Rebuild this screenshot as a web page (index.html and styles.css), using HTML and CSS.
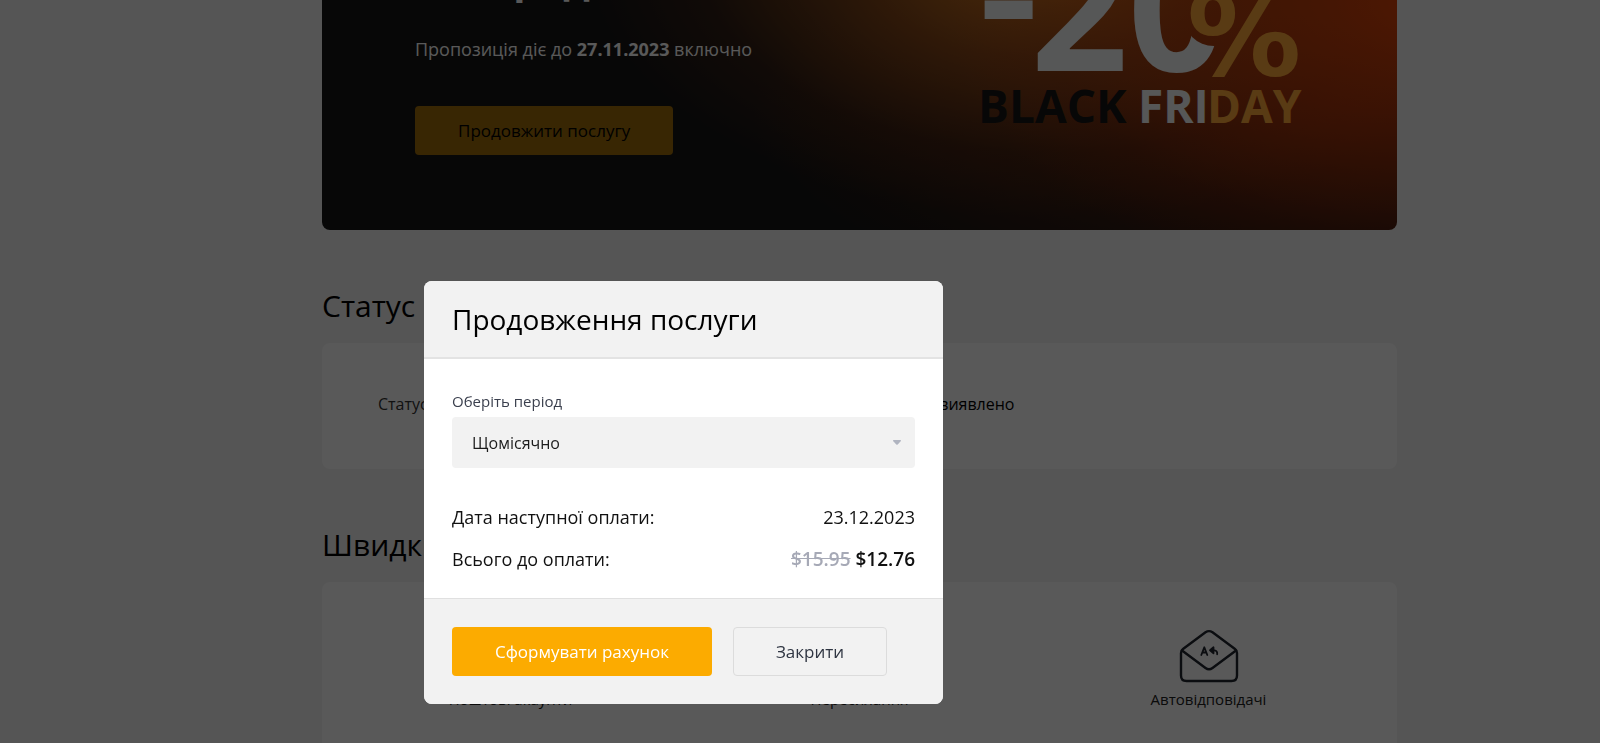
FILE: index.html
```html
<!DOCTYPE html>
<html lang="uk">
<head>
<meta charset="utf-8">
<meta name="viewport" content="width=device-width, initial-scale=1">
<title>Продовження послуги</title>
<link rel="stylesheet" href="styles.css">
</head>
<body>
<main class="page">
  <section class="banner">
    <div class="banner-copy">
      <h1 class="banner-title">Розпродаж</h1>
      <p class="banner-text">Пропозиція діє до <strong>27.11.2023</strong> включно</p>
      <button class="btn btn-banner" type="button">Продовжити послугу</button>
    </div>
    <svg class="banner-art" viewBox="0 0 326 130" role="img" aria-label="-20% Black Friday">
      <defs>
        <mask id="zero-cut">
          <rect x="0" y="-80" width="326" height="220" fill="#fff"/>
          <circle cx="236" cy="15" r="31" fill="#000"/>
          <rect x="216" y="-80" width="60" height="95" fill="#000"/>
        </mask>
      </defs>
      <text class="art-minus" x="0" y="61">-</text>
      <text class="art-digits" x="53" y="71">2</text>
      <text class="art-digits" x="150" y="71" mask="url(#zero-cut)">0</text>
      <text class="art-percent" x="209" y="75">%</text>
      <text class="art-word art-black" x="0" y="123">BLACK</text>
      <text class="art-word art-white" x="160" y="123">FRI</text>
      <text class="art-word art-gold" x="229" y="123">DAY</text>
    </svg>
  </section>

  <section class="section">
    <h2 class="section-title">Статус</h2>
    <div class="card status">
      <span class="status-label">Статус</span>
      <span class="status-value">Загроз не виявлено</span>
    </div>
  </section>

  <section class="section">
    <h2 class="section-title">Швидкий доступ</h2>
    <div class="card shortcuts">
      <a class="shortcut" href="#">
        <svg class="shortcut-icon" viewBox="0 0 60 54" aria-hidden="true"><rect x="2" y="8" width="56" height="44" rx="5"/><path d="M3 11l27 22 27-22"/></svg>
        <span>Поштові акаунти</span>
      </a>
      <a class="shortcut" href="#">
        <svg class="shortcut-icon" viewBox="0 0 60 54" aria-hidden="true"><rect x="2" y="8" width="56" height="44" rx="5"/><path d="M3 11l27 22 27-22"/></svg>
        <span>Пересилання</span>
      </a>
      <a class="shortcut" href="#">
        <svg class="shortcut-icon" viewBox="0 0 60 54" aria-hidden="true">
          <path d="M2 24Q2 21.500 4 20L26.500 3.300Q30 1 33.500 3.300L56 20Q58 21.500 58 24V46.500Q58 52 52.500 52H7.500Q2 52 2 46.500Z"/>
          <path d="M3 21.500L26.500 39Q30 41.600 33.500 39L57 21.500"/>
          <path class="glyph" d="M22.300 26L25.300 18.300L28.300 26M23.400 23.500H27.200"/>
          <path class="glyph arrow" d="M31 21.300L34.500 18.300V24.300Z"/>
          <path class="glyph" d="M34 21.300H35.500Q38.500 21.500 38.200 25.300"/>
        </svg>
        <span>Автовідповідачі</span>
      </a>
    </div>
  </section>
</main>

<div class="overlay">
  <form class="modal" role="dialog" aria-modal="true" aria-labelledby="modal-title">
    <header class="modal-head">
      <h2 class="modal-title" id="modal-title">Продовження послуги</h2>
    </header>
    <div class="modal-body">
      <label class="field-label" for="period">Оберіть період</label>
      <div class="select-wrap">
        <select class="select" id="period">
          <option>Щомісячно</option>
          <option>Щорічно</option>
        </select>
        <svg class="select-arrow" viewBox="0 0 8 5" aria-hidden="true"><path d="M.5 0h7q.8.600.2 1.300L4.700 4.500q-.7.700-1.400 0L.3 1.300Q-.3.600.5 0z"/></svg>
      </div>
      <dl class="summary">
        <div class="summary-row">
          <dt>Дата наступної оплати:</dt>
          <dd>23.12.2023</dd>
        </div>
        <div class="summary-row">
          <dt>Всього до оплати:</dt>
          <dd class="price"><s class="price-old">$15.95</s> <span>$12.76</span></dd>
        </div>
      </dl>
    </div>
    <footer class="modal-foot">
      <button class="btn btn-primary" type="submit">Сформувати рахунок</button>
      <button class="btn btn-outline" type="button">Закрити</button>
    </footer>
  </form>
</div>
</body>
</html>
```

FILE: styles.css
```css
* {
  box-sizing: border-box;
}

html,
body {
  height: 100%;
}

body {
  margin: 0;
  overflow: hidden;
  background: #f2f2f2;
  color: #000;
  font-family: "Open Sans", "Noto Sans", sans-serif;
  font-size: 16px;
  line-height: 24px;
}

h1,
h2,
p,
dl,
dd {
  margin: 0;
}

.page {
  padding: 0 203px 0 322px;
}

/* Banner */
.banner {
  display: flex;
  justify-content: space-between;
  align-items: flex-start;
  padding: 0 93px 75px;
  border-radius: 0 0 8px 8px;
  overflow: hidden;
  background:
    radial-gradient(ellipse 46% 130% at 104% 0%, #e8480a, rgba(205, 60, 10, 0.6) 45%, rgba(160, 40, 10, 0.2) 80%, transparent),
    radial-gradient(ellipse 44% 115% at 68% -20%, #e88a24, rgba(190, 98, 28, 0.65) 40%, rgba(130, 60, 20, 0.25) 75%, transparent),
    radial-gradient(ellipse 50% 90% at 90% 50%, rgba(150, 50, 10, 0.55), transparent),
    #141414;
}

.banner-title {
  height: 3px;
  font-size: 40px;
  line-height: 48px;
  display: flex;
  align-items: flex-end;
}

.banner-copy {
  color: #fff;
}

.banner-text {
  margin: 32px 0 43px;
  font-size: 18px;
  line-height: 28px;
}

.banner-art {
  width: 326px;
  height: 130px;
  overflow: visible;
  font-family: "Open Sans", sans-serif;
  font-weight: 700;
}

.art-minus {
  font-size: 190px;
  font-weight: 600;
  fill: #f5f8f8;
}

.art-digits {
  font-size: 170px;
  fill: #f5f8f8;
}

.art-percent {
  font-family: "DejaVu Sans", sans-serif;
  font-size: 114px;
  fill: #ffa939;
}

.art-word {
  font-size: 46px;
}

.art-black {
  fill: #141414;
}

.art-white {
  fill: #f5f8f8;
}

.art-gold {
  fill: #ffa939;
}

/* Page sections */
.section-title {
  padding: 56px 0 17px;
  font-size: 30px;
  font-weight: 400;
  line-height: 40px;
}

.card {
  border-radius: 8px;
  background: #fff;
}

.status {
  display: grid;
  grid-template-columns: 1fr 1fr;
  padding: 49px 56px 53px;
}

.status-label {
  color: #333;
}

.shortcuts {
  display: grid;
  grid-template-columns: repeat(3, 1fr);
  padding: 47px 14px;
}

.shortcut {
  display: flex;
  flex-direction: column;
  align-items: center;
  gap: 4px;
  color: #222;
  font-size: 15px;
  text-decoration: none;
}

.shortcut-icon {
  width: 60px;
  height: 54px;
  fill: none;
  stroke: #20252f;
  stroke-width: 2.4;
  stroke-linejoin: round;
  stroke-linecap: round;
}

.glyph {
  stroke-width: 1.8;
}

.arrow {
  fill: #20252f;
}

/* Buttons */
.btn {
  padding: 11px 42px;
  border: 1px solid transparent;
  border-radius: 4px;
  font: 17px/25px "Open Sans", "Noto Sans", sans-serif;
}

.btn-banner {
  background: #a06e0b;
  color: #000;
}

.btn-primary {
  background: #fcab00;
  color: #fff;
}

.btn-outline {
  border-color: #dcdcdc;
  background: transparent;
  color: #2f3542;
}

/* Modal */
.overlay {
  position: fixed;
  inset: 0;
  padding: 281px 24px 24px 26.5%;
  background: rgba(0, 0, 0, 0.65);
}

.modal {
  max-width: 519px;
  border-radius: 8px;
  overflow: hidden;
  background: #fff;
}

.modal-head {
  padding: 18px 28px;
  border-bottom: 2px solid #e3e3e3;
  background: #f2f2f2;
}

.modal-title {
  font-size: 28px;
  font-weight: 400;
  line-height: 40px;
}

.modal-body {
  padding: 31px 28px 25px;
}

.field-label {
  display: block;
  margin-bottom: 5px;
  color: #3a3f4d;
  font-size: 15px;
  line-height: 22px;
}

.select-wrap {
  position: relative;
}

.select {
  display: block;
  width: 100%;
  height: 51px;
  padding: 0 20px;
  border: 0;
  border-radius: 4px;
  appearance: none;
  background: #f2f2f2;
  color: #1c1c1c;
  font: 16px/24px "Open Sans", "Noto Sans", sans-serif;
}

.select-arrow {
  position: absolute;
  top: 23px;
  right: 14px;
  width: 8px;
  height: 5px;
  fill: #b0b4c0;
  pointer-events: none;
}

.summary {
  display: grid;
  gap: 14px;
  margin-top: 35px;
  color: #111;
  font-size: 18px;
  line-height: 28px;
}

.summary-row {
  display: flex;
  justify-content: space-between;
}

.price {
  font-size: 19px;
  font-weight: 600;
}

.price-old {
  color: #a6a9b6;
}

.modal-foot {
  display: flex;
  gap: 21px;
  padding: 28px;
  border-top: 1px solid #e0e0e0;
  background: #f2f2f2;
}
```
